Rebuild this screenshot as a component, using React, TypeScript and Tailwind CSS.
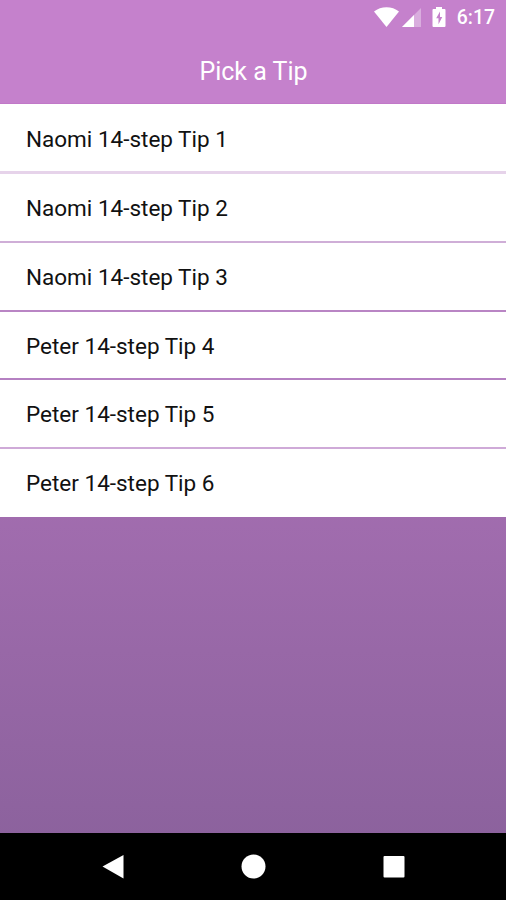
const tips = [
  { label: "Naomi 14-step Tip 1", line: "border-b-3 border-[#e6d3ea]", h: "h-[70px] pt-[5px]" },
  { label: "Naomi 14-step Tip 2", line: "border-b-2 border-[#cfaed7]", h: "h-[69px] pt-[3px]" },
  { label: "Naomi 14-step Tip 3", line: "border-b-2 border-[#b985c4]", h: "h-[69px] pt-[3px]" },
  { label: "Peter 14-step Tip 4", line: "border-b-2 border-[#b581c2]", h: "h-[68px] pt-[3px]" },
  { label: "Peter 14-step Tip 5", line: "border-b-2 border-[#cfaad8]", h: "h-[69px] pt-[3px]" },
  { label: "Peter 14-step Tip 6", line: "border-b-0", h: "h-[68px] pt-[2px]" },
];

export default function App() {
  return (
    <div className="flex h-[900px] w-[506px] flex-col overflow-hidden bg-gradient-to-b from-[#c37dca] to-[#88609a] font-['Roboto',sans-serif]">
      <header className="h-[104px] shrink-0 border-b border-[#c178c8] bg-[#c581cc] text-white">
        <div className="flex h-9 items-center justify-end pr-[11px]">
          <svg width="74" height="24" viewBox="0 0 74 24" fill="white">
            <path d="M0 5.500C7-.2 18-.2 25 5.500L12.500 21Z" />
            <path d="M47 2V21H28Z" opacity=".35" />
            <path d="M40 9V21H28Z" />
            <path fillRule="evenodd" d="M59.500 3h2.500V1h6v2h2.500q1 0 1 1v16q0 1-1 1h-11q-1 0-1-1V4q0-1 1-1ZM66 5.500l-3.800 6.700h2.300v6l3.800-7.200H66Z" />
          </svg>
          <span className="ml-[9px] text-[19.4px] font-medium">6:17</span>
        </div>
        <h1 className="flex h-[67px] items-center justify-center pl-px pt-[4px] text-[25px]">Pick a Tip</h1>
      </header>
      <main className="h-[729px] shrink-0">
        {tips.map((tip) => (
          <div key={tip.label} className={`flex items-center bg-white pl-[26px] text-[22.5px] text-[#111] ${tip.line} ${tip.h}`}>
            {tip.label}
          </div>
        ))}
      </main>
      <nav className="flex h-[67px] shrink-0 items-center bg-black">
        <svg width="506" height="67" viewBox="0 0 506 67" fill="white">
          <path d="M102.500 33.500 123.500 22V45.500Z" />
          <circle cx="253.500" cy="33.500" r="12" />
          <rect x="383.500" y="23" width="21" height="21.500" rx="1" />
        </svg>
      </nav>
    </div>
  );
}
